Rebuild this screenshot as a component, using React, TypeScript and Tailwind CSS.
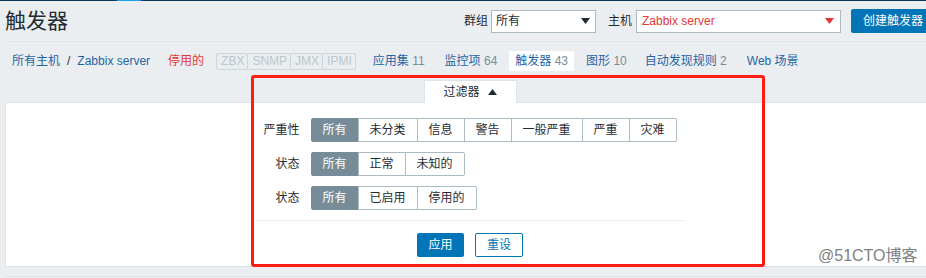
import React from 'react';
import clsx from 'clsx';

const FONT = { fontFamily: '"Liberation Sans", "Noto Sans CJK SC", sans-serif' };

const Caret = ({ color = '#1f2c33', up = false }: { color?: string; up?: boolean }) => (
  <svg width="9" height="6" viewBox="0 0 9 6" className="shrink-0">
    <path d={up ? 'M0 6 L4.5 0 L9 6 Z' : 'M0 0 L9 0 L4.5 6 Z'} fill={color} />
  </svg>
);

const Segmented = ({ items }: { items: string[] }) => (
  <div className="flex">
    {items.map((label, i) => (
      <div
        key={label + i}
        className={clsx(
          'h-[24px] px-[11px] border flex items-center',
          i > 0 && '-ml-px',
          i === 0 && 'rounded-l-[2px]',
          i === items.length - 1 && 'rounded-r-[2px]',
          i === 0 ? 'bg-[#768d99] border-[#768d99] text-white' : 'bg-white border-[#acbbc2] text-[#1f2c33]'
        )}
      >
        {label}
      </div>
    ))}
  </div>
);

const FilterRow = ({ label, items }: { label: string; items: string[] }) => (
  <div className="flex items-center">
    <div className="w-[45px] text-right text-[#1f2c33]">{label}</div>
    <div className="ml-[11px]">
      <Segmented items={items} />
    </div>
  </div>
);

const NavLink = ({ name, count, className }: { name: string; count?: number; className?: string }) => (
  <span className={clsx('text-[#1f65a6] whitespace-nowrap', className)}>
    {name}
    {count !== undefined && <span className="text-[#768d99]"> {count}</span>}
  </span>
);

export default function App() {
  return (
    <div className="relative w-[926px] h-[278px] overflow-hidden bg-[#ebeef0] text-[12px]" style={FONT}>
      {/* top stripe */}
      <div className="h-px bg-[#0e3a5a] flex">
        <div className="ml-[117px] w-[24px] bg-[#1a9ee6]" />
      </div>

      <div className="w-[940px] px-[5px]">
        {/* header */}
        <div className="h-[41px] flex items-center border-b border-[#dfe4e7]">
          <h1 className="text-[21px] text-[#1f2c33] leading-none -mt-px">触发器</h1>
          <div className="ml-auto flex items-center">
            <span className="text-[#1f2c33]">群组</span>
            <div className="ml-[3px] w-[105px] h-[23px] bg-white border border-[#acbbc2] flex items-center pl-[4px] pr-[5px]">
              <span className="text-[#1f2c33]">所有</span>
              <span className="ml-auto"><Caret /></span>
            </div>
            <span className="ml-[12px] text-[#1f2c33]">主机</span>
            <div className="ml-[4px] w-[205px] h-[23px] bg-white border border-[#acbbc2] flex items-center pl-[5px] pr-[6px]">
              <span className="text-[#e33734]">Zabbix server</span>
              <span className="ml-auto"><Caret color="#e33734" /></span>
            </div>
            <button className="ml-[10px] w-[84px] h-[24px] bg-[#0275b8] text-white rounded-[2px] pl-[12px] text-left">
              创建触发器
            </button>
          </div>
        </div>

        {/* host navigation */}
        <div className="h-[38px] flex items-center pl-[7px]">
          <NavLink name="所有主机" />
          <span className="mx-[7px] text-[#1f2c33]">/</span>
          <NavLink name="Zabbix server" />
          <span className="ml-[18px] text-[#e33734]">停用的</span>
          <div className="ml-[12px] flex">
            {['ZBX', 'SNMP', 'JMX', 'IPMI'].map((t, i) => (
              <span
                key={t}
                className={clsx(
                  'h-[17px] pl-[4px] pr-[3px] border border-[#cdd6da] rounded-[2px] text-[#bcc7cc] leading-[15px]',
                  i > 0 && '-ml-px'
                )}
              >
                {t}
              </span>
            ))}
          </div>
          <NavLink name="应用集" count={11} className="ml-[17px]" />
          <NavLink name="监控项" count={64} className="ml-[20px]" />
          <div className="ml-[12px] h-[20px] px-[6px] bg-white rounded-[2px] flex items-center">
            <NavLink name="触发器" count={43} />
          </div>
          <NavLink name="图形" count={10} className="ml-[12px]" />
          <NavLink name="自动发现规则" count={2} className="ml-[18px]" />
          <NavLink name="Web 场景" className="ml-[20px]" />
        </div>

        {/* filter */}
        <div className="flex justify-center">
          <div className="relative z-10 -mb-px w-[93px] h-[23px] bg-white border border-b-0 border-[#dfe4e7] flex items-center justify-center gap-[8px] text-[#1f2c33]">
            <span>过滤器</span>
            <Caret up />
          </div>
        </div>
        <div className="bg-white border border-[#dfe4e7] pt-[15px] pb-[9px]">
          <div className="mx-auto w-[431px]">
            <div className="flex flex-col gap-[10px]">
              <FilterRow label="严重性" items={['所有', '未分类', '信息', '警告', '一般严重', '严重', '灾难']} />
              <FilterRow label="状态" items={['所有', '正常', '未知的']} />
              <FilterRow label="状态" items={['所有', '已启用', '停用的']} />
            </div>
            <div className="mt-[10px] border-t border-[#ebeef0]" />
            <div className="pt-[12px] flex justify-center gap-[11px]">
              <button className="w-[47px] h-[24px] bg-[#0275b8] text-white rounded-[2px]">应用</button>
              <button className="w-[48px] h-[24px] bg-white text-[#0275b8] border border-[#0275b8] rounded-[2px]">重设</button>
            </div>
          </div>
        </div>
        <div className="mt-[9px] border-t border-[#dfe4e7]" />
      </div>

      {/* screenshot annotation */}
      <div className="absolute left-[251px] top-[75px] w-[514px] h-[192px] border-[3px] border-[#fe1d12] rounded-[3px] pointer-events-none" />

      {/* watermark */}
      <div
        className="absolute left-[818px] top-[248px] text-[16px] text-[#808080] leading-none"
        style={{ textShadow: '0 0 2px #fff' }}
      >
        @51CTO博客
      </div>
    </div>
  );
}
